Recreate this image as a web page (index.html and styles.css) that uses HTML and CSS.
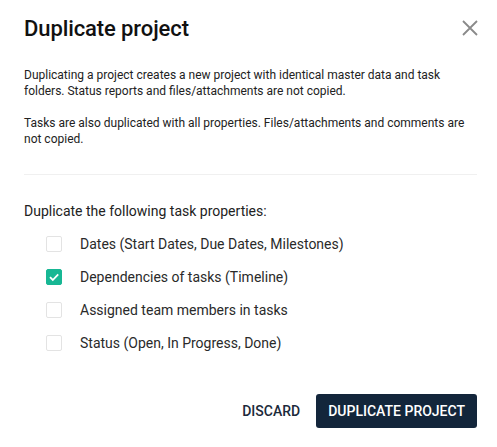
FILE: index.html
```html
<!DOCTYPE html>
<html>
<head>
<meta charset="utf-8">
<link rel="stylesheet" href="styles.css">
</head>
<body>
<div class="dialog">
  <div class="header">
    <h1 class="title">Duplicate project</h1>
    <button class="close" aria-label="Close">
      <svg width="16" height="16" viewBox="0 0 16 16"><path d="M1 1 L15 15 M15 1 L1 15" stroke="#8a8a8a" stroke-width="1.8" fill="none"/></svg>
    </button>
  </div>
  <div class="intro">
    <p>Duplicating a project creates a new project with identical master data and task folders. Status reports and files/attachments are not copied.</p>
    <p>Tasks are also duplicated with all properties. Files/attachments and comments are not copied.</p>
  </div>
  <hr class="divider">
  <div class="props">
    <div class="props-title">Duplicate the following task properties:</div>
    <ul class="options">
      <li class="option"><span class="box"></span><span>Dates (Start Dates, Due Dates, Milestones)</span></li>
      <li class="option"><span class="box checked"><svg width="12" height="12" viewBox="0 0 12 12"><path d="M2 6.2 L4.8 9 L10.2 3.4" stroke="#fff" stroke-width="1.8" fill="none"/></svg></span><span>Dependencies of tasks (Timeline)</span></li>
      <li class="option"><span class="box"></span><span>Assigned team members in tasks</span></li>
      <li class="option"><span class="box"></span><span>Status (Open, In Progress, Done)</span></li>
    </ul>
  </div>
  <div class="actions">
    <button class="btn btn-text">DISCARD</button>
    <button class="btn btn-primary">DUPLICATE PROJECT</button>
  </div>
</div>
</body>
</html>
```

FILE: styles.css
```css
* { box-sizing: border-box; }
html, body { margin: 0; padding: 0; background: #fff; }
body { font-family: Roboto, "Liberation Sans", sans-serif; color: #222; }
.dialog { width: 497px; height: 447px; padding: 14px 20px 0 24px; }
.header { display: flex; justify-content: space-between; align-items: center; height: 28px; }
.title { margin: 0; font-size: 22px; font-weight: 500; color: #111; letter-spacing: -0.1px; }
.close { background: none; border: 0; padding: 0; margin-right: -1px; width: 16px; height: 16px; display: flex; cursor: pointer; }
.intro { margin-top: 25px; padding-right: 4px; }
.intro p { margin: 0 0 16px; font-size: 12px; line-height: 16px; color: #222; }
.divider { border: 0; border-top: 1px solid #f0f0f0; margin: 27px 0 0; width: 453px; }
.props { margin-top: 27px; }
.props-title { font-size: 14px; line-height: 18px; color: #222; }
.options { list-style: none; margin: 7px 0 0; padding: 0 0 0 22px; }
.option { display: flex; align-items: center; height: 33px; font-size: 14px; color: #2a2a2a; }
.box { width: 16px; height: 16px; border: 1.5px solid #e3e3e3; border-radius: 2px; margin-right: 18px; display: flex; align-items: center; justify-content: center; }
.box.checked { background: #17b794; border-color: #17b794; }
.actions { display: flex; justify-content: flex-end; align-items: center; margin-top: 35px; gap: 16px; }
.btn { font-family: Roboto, "Liberation Sans", sans-serif; font-size: 14px; font-weight: 500; border: 0; border-radius: 3px; cursor: pointer; }
.btn-text { background: none; color: #1c2a3a; padding: 0; }
.btn-primary { background: #13263b; color: #fff; height: 34px; padding: 0 12px; }
```
